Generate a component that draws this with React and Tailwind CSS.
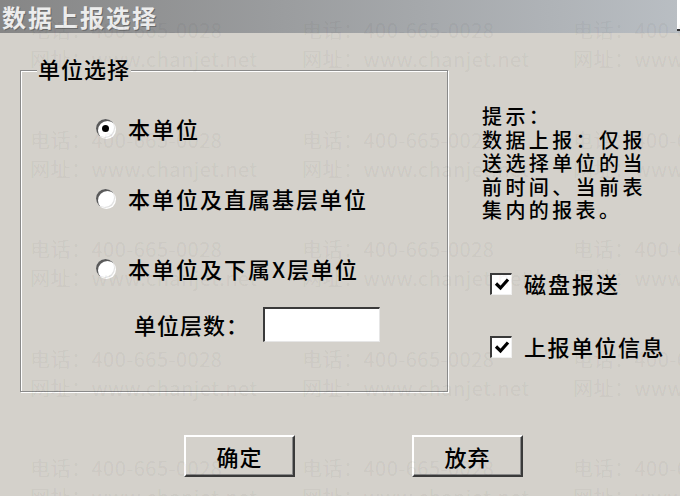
import React from "react";

const rows = [0, 1, 2, 3, 4];
const cols = [30, 302, 573];

function Radio({ checked }) {
  return (
    <div className="w-[19px] h-[19px] rounded-full bg-white shadow-[inset_2px_2px_0_#5a5a5a,inset_-1px_-1px_0_#e2e2e2,1px_1px_0_#ffffff] flex items-center justify-center shrink-0">
      {checked && <div className="w-[7px] h-[7px] rounded-full bg-black" />}
    </div>
  );
}

function Check() {
  return (
    <div className="w-[22px] h-[22px] bg-white border-t-2 border-l-2 border-t-[#3a3a3a] border-l-[#3a3a3a] border-r border-b border-r-[#f0f0f0] border-b-[#f0f0f0] flex items-center justify-center shrink-0">
      <svg width="16" height="14" viewBox="0 0 16 14">
        <path d="M2 6.5 L6.5 11 L14 2.5" fill="none" stroke="#000" strokeWidth="3.2" strokeLinejoin="miter" />
      </svg>
    </div>
  );
}

function Button({ children }) {
  return (
    <div className="w-[111px] h-[42px] bg-[#d4d1cb] border-t-2 border-l-2 border-t-white border-l-white border-r-2 border-b-2 border-r-[#3a3a3a] border-b-[#3a3a3a] shadow-[inset_-1px_-1px_0_#8a8a8a] flex items-center justify-center text-[22px] tracking-[1px] font-medium text-black">
      {children}
    </div>
  );
}

export default function App() {
  return (
    <div className="relative w-[680px] h-[496px] overflow-hidden bg-[#d4d1cb] font-['Noto_Sans_CJK_SC','Noto_Sans',sans-serif] text-black">
      {/* Title bar */}
      <div className="h-[33px] bg-linear-to-r from-[#868686] to-[#b9bec3] flex items-center pl-[2px] relative">
        <span className="text-[24px] font-bold leading-none tracking-[2px] text-[#ececec] [text-shadow:1px_1px_0_#6a6a6a]">
          数据上报选择
        </span>
        <div className="absolute right-0 top-0 w-[3px] h-[31px] bg-white border-b-2 border-[#333]" />
      </div>

      <div className="flex">
        {/* Group box */}
        <div className="relative ml-[20px] mt-[37px] w-[428px] h-[322px] border border-[#8a8a8a] shadow-[inset_1px_1px_0_#ffffff,1px_1px_0_#ffffff]">
          <div className="absolute left-[16px] top-[-14px] px-[1px] bg-[#d4d1cb] text-[22px] leading-[22px] tracking-[1px] font-medium">
            单位选择
          </div>
          <div className="flex flex-col pt-[42px] pl-[75px] gap-[40px]">
            <div className="h-[30px] flex items-center gap-[13px]">
              <Radio checked />
              <span className="text-[22px] tracking-[2px] font-medium">本单位</span>
            </div>
            <div className="h-[30px] flex items-center gap-[13px]">
              <Radio />
              <span className="text-[22px] tracking-[2px] font-medium">本单位及直属基层单位</span>
            </div>
            <div className="h-[30px] flex items-center gap-[13px]">
              <Radio />
              <span className="text-[22px] tracking-[2px] font-medium">本单位及下属X层单位</span>
            </div>
          </div>
          <div className="flex items-center mt-[24px] pl-[113px] h-[35px]">
            <span className="w-[129px] text-[22px] tracking-[1px] font-medium">单位层数：</span>
            <div className="w-[117px] h-[35px] bg-white border-t-2 border-l-2 border-t-[#3a3a3a] border-l-[#3a3a3a] border-r border-b border-r-[#e6e6e6] border-b-[#e6e6e6]" />
          </div>
        </div>

        {/* Right column */}
        <div className="ml-[34px] flex flex-col">
          <div className="mt-[71px] w-[180px] text-[20px] leading-[23.5px] tracking-[3.4px] font-medium">
            <div>提示：</div>
            <div>数据上报：仅报</div>
            <div>送选择单位的当</div>
            <div>前时间、当前表</div>
            <div>集内的报表。</div>
          </div>
          <div className="mt-[50px] ml-[8px] flex items-center h-[24px] gap-[12px]">
            <Check />
            <span className="text-[22px] tracking-[2px] font-medium">磁盘报送</span>
          </div>
          <div className="mt-[39px] ml-[8px] flex items-center h-[24px] gap-[12px]">
            <Check />
            <span className="text-[22px] tracking-[1.5px] font-medium">上报单位信息</span>
          </div>
        </div>
      </div>

      {/* Buttons */}
      <div className="flex mt-[43px] pl-[184px] gap-[117px]">
        <Button>确定</Button>
        <Button>放弃</Button>
      </div>

      {/* Watermark overlay */}
      <div className="absolute inset-0 pointer-events-none">
        {rows.map((r) =>
          cols.map((c) => (
            <div
              key={`${r}-${c}`}
              className="absolute text-[20px] leading-[24px] tracking-[0.5px] text-black/[0.055] whitespace-nowrap"
              style={{ left: c, top: 18 + r * 109.5 }}
            >
              <div>电话：400-665-0028</div>
              <div className="mt-[5px]">网址：www.chanjet.net</div>
            </div>
          ))
        )}
      </div>
    </div>
  );
}
